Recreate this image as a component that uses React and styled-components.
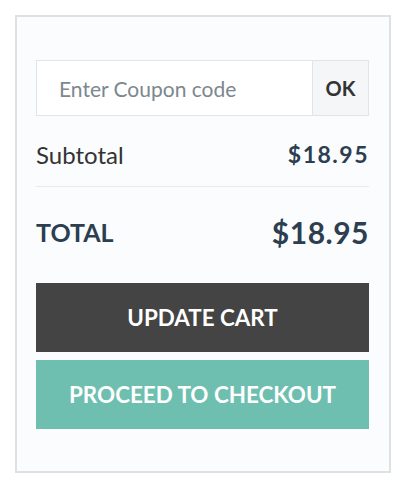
import React from "react";
import styled, { createGlobalStyle } from "styled-components";

const GlobalStyle = createGlobalStyle`
  * { box-sizing: border-box; }
  body {
    margin: 0;
    background: #ffffff;
    font-family: Lato, "Open Sans", sans-serif;
  }
`;

const App = () => {
  return (
    <>
      <GlobalStyle />
      <Page>
        <Card>
          <Coupon>
            <CouponInput placeholder="Enter Coupon code" />
            <OkButton>OK</OkButton>
          </Coupon>
          <Row>
            <Label>Subtotal</Label>
            <Amount>$18.95</Amount>
          </Row>
          <Row $total>
            <Label $total>TOTAL</Label>
            <Amount $total>$18.95</Amount>
          </Row>
          <Actions>
            <ActionButton $bg="#444444">UPDATE CART</ActionButton>
            <ActionButton $bg="#6fbfb0">PROCEED TO CHECKOUT</ActionButton>
          </Actions>
        </Card>
      </Page>
    </>
  );
};

export default App;

const Page = styled.div`
  padding: 15px 9px 18px 15px;
`;

const Card = styled.div`
  width: 376px;
  height: 458px;
  border: 2px solid #dde1e4;
  background: #fafcfd;
  padding: 43px 20px 0 19px;
`;

const Coupon = styled.div`
  display: flex;
  height: 56px;
  border: 1px solid #e1e5e8;
  background: #ffffff;
`;

const CouponInput = styled.input`
  flex: 1;
  min-width: 0;
  border: none;
  outline: none;
  background: transparent;
  padding: 0 0 0 22px;
  font-family: inherit;
  font-size: 21px;
  color: #333;
  &::placeholder {
    color: #7d878e;
  }
`;

const OkButton = styled.button`
  width: 56px;
  border: none;
  border-left: 1px solid #e1e5e8;
  background: #f4f6f7;
  font-family: inherit;
  font-weight: 700;
  font-size: 20px;
  color: #333;
  cursor: pointer;
`;

const Row = styled.div`
  display: flex;
  align-items: center;
  justify-content: space-between;
  height: ${(p) => (p.$total ? "90px" : "71px")};
  padding-top: ${(p) => (p.$total ? "0" : "6px")};
  border-bottom: ${(p) => (p.$total ? "none" : "1px solid #e8ebee")};
`;

const Label = styled.span`
  font-size: ${(p) => (p.$total ? "25px" : "24px")};
  font-weight: ${(p) => (p.$total ? 700 : 400)};
  color: ${(p) => (p.$total ? "#2c3e50" : "#333333")};
`;

const Amount = styled.span`
  font-size: ${(p) => (p.$total ? "30px" : "23px")};
  font-weight: 700;
  letter-spacing: ${(p) => (p.$total ? "0.5px" : "1.5px")};
  color: #2c3e50;
`;

const Actions = styled.div`
  display: flex;
  flex-direction: column;
  gap: 8px;
  margin-top: 6px;
`;

const ActionButton = styled.button`
  height: 69px;
  border: none;
  background: ${(p) => p.$bg};
  color: #ffffff;
  font-family: inherit;
  font-weight: 700;
  font-size: 22.4px;
  cursor: pointer;
`;
